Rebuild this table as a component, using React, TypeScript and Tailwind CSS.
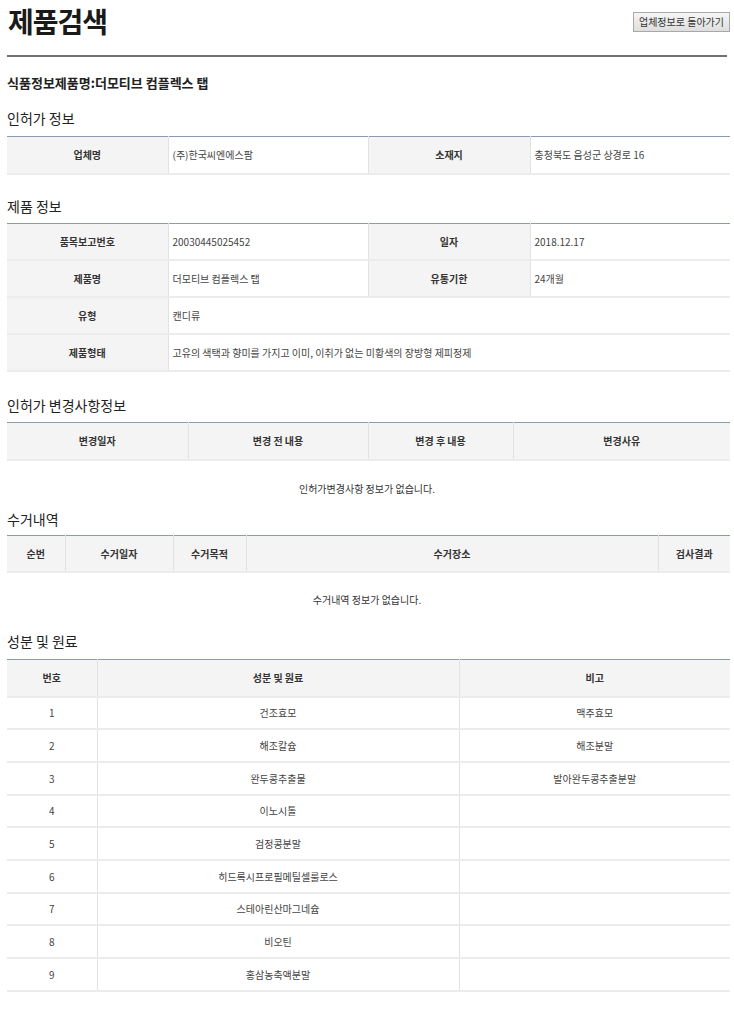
import type { ReactNode } from "react";

const font = {
	fontFamily: '"Noto Sans CJK KR", "Noto Sans", sans-serif',
};

function SectionTitle({ children, className }: { children: ReactNode; className: string }) {
	return (
		<h2 className={`text-[14px] leading-[20px] text-[#222] ${className}`}>{children}</h2>
	);
}

function Th({ children, className = "" }: { children?: ReactNode; className?: string }) {
	return (
		<th
			className={`bg-[#f4f4f4] text-[10px] font-bold text-[#333] text-center align-middle ${className}`}
		>
			{children}
		</th>
	);
}

function Td({
	children,
	className = "",
	colSpan,
}: {
	children?: ReactNode;
	className?: string;
	colSpan?: number;
}) {
	return (
		<td
			colSpan={colSpan}
			className={`text-[10px] text-[#444] align-middle ${className}`}
		>
			{children}
		</td>
	);
}

function InfoTable({
	rows,
}: {
	rows: { cells: [string, string] | [string, string, string, string] }[];
}) {
	return (
		<table className="w-[723px] table-fixed border-collapse border-t border-t-[#8a9ab0]">
			<colgroup>
				<col className="w-[161px]" />
				<col className="w-[200px]" />
				<col className="w-[162px]" />
				<col className="w-[200px]" />
			</colgroup>
			<tbody>
				{rows.map((r, i) => (
					<tr key={i} className="h-[37px] border-b-2 border-b-[#ececec]">
						<Th className="border-r border-r-[#e2e2e2]">{r.cells[0]}</Th>
						{r.cells.length === 4 ? (
							<>
								<Td className="pl-[4px] border-r border-r-[#e2e2e2]">{r.cells[1]}</Td>
								<Th className="border-r border-r-[#e2e2e2]">{r.cells[2]}</Th>
								<Td className="pl-[4px]">{r.cells[3]}</Td>
							</>
						) : (
							<Td colSpan={3} className="pl-[4px]">
								{r.cells[1]}
							</Td>
						)}
					</tr>
				))}
			</tbody>
		</table>
	);
}

function HeadTable({ cols }: { cols: { label: string; w: string }[] }) {
	return (
		<table className="w-[723px] table-fixed border-collapse border-t border-t-[#8a9ab0]">
			<colgroup>
				{cols.map((c) => (
					<col key={c.label} className={c.w} />
				))}
			</colgroup>
			<thead>
				<tr className="h-[37px] border-b-2 border-b-[#ececec]">
					{cols.map((c, i) => (
						<Th
							key={c.label}
							className={i < cols.length - 1 ? "border-r border-r-[#e2e2e2]" : ""}
						>
							{c.label}
						</Th>
					))}
				</tr>
			</thead>
		</table>
	);
}

const ingredients: [string, string][] = [
	["건조효모", "맥주효모"],
	["해조칼슘", "해조분말"],
	["완두콩추출물", "발아완두콩추출분말"],
	["이노시톨", ""],
	["검정콩분말", ""],
	["히드록시프로필메틸셀룰로스", ""],
	["스테아린산마그네슘", ""],
	["비오틴", ""],
	["홍삼농축액분말", ""],
];

export default function App() {
	return (
		<div className="min-h-[1024px] w-[734px] bg-white px-[7px]" style={font}>
			<div className="flex h-[55px] items-start justify-between">
				<h1 className="pl-[1px] pt-[2px] text-[28px] font-bold leading-[38px] tracking-[-1px] text-[#1a1a1a]">
					제품검색
				</h1>
				<button
					type="button"
					className="mr-[-3px] mt-[12px] h-[20px] w-[97px] border border-[#a8a8a8] bg-gradient-to-b from-[#f6f6f6] to-[#dedede] text-[10px] leading-[18px] text-[#333]"
				>
					업체정보로 돌아가기
				</button>
			</div>
			<div className="h-[2px] bg-[#6f6f74]" />

			<p className="mt-[16px] text-[13px] font-bold leading-[20px] text-[#222]">
				식품정보제품명:더모티브 컴플렉스 탭
			</p>

			<SectionTitle className="mt-[15px] mb-[8px]">인허가 정보</SectionTitle>
			<InfoTable rows={[{ cells: ["업체명", "(주)한국씨엔에스팜", "소재지", "충청북도 음성군 상경로 16"] }]} />

			<SectionTitle className="mt-[21px] mb-[7px]">제품 정보</SectionTitle>
			<InfoTable
				rows={[
					{ cells: ["품목보고번호", "20030445025452", "일자", "2018.12.17"] },
					{ cells: ["제품명", "더모티브 컴플렉스 탭", "유통기한", "24개월"] },
					{ cells: ["유형", "캔디류"] },
					{ cells: ["제품형태", "고유의 색택과 향미를 가지고 이미, 이취가 없는 미황색의 장방형 제피정제"] },
				]}
			/>

			<SectionTitle className="mt-[23px] mb-[7px]">인허가 변경사항정보</SectionTitle>
			<HeadTable
				cols={[
					{ label: "변경일자", w: "w-[181px]" },
					{ label: "변경 전 내용", w: "w-[180px]" },
					{ label: "변경 후 내용", w: "w-[145px]" },
					{ label: "변경사유", w: "w-[217px]" },
				]}
			/>
			<p className="mt-[18px] text-center text-[10px] leading-[20px] text-[#333]">
				인허가변경사항 정보가 없습니다.
			</p>

			<SectionTitle className="mt-[10px] mb-[6px]">수거내역</SectionTitle>
			<HeadTable
				cols={[
					{ label: "순번", w: "w-[58px]" },
					{ label: "수거일자", w: "w-[108px]" },
					{ label: "수거목적", w: "w-[73px]" },
					{ label: "수거장소", w: "w-[412px]" },
					{ label: "검사결과", w: "w-[72px]" },
				]}
			/>
			<p className="mt-[17px] text-center text-[10px] leading-[20px] text-[#333]">
				수거내역 정보가 없습니다.
			</p>

			<SectionTitle className="mt-[21px] mb-[8px]">성분 및 원료</SectionTitle>
			<table className="w-[723px] table-fixed border-collapse border-t border-t-[#8a9ab0]">
				<colgroup>
					<col className="w-[90px]" />
					<col className="w-[362px]" />
					<col className="w-[271px]" />
				</colgroup>
				<thead>
					<tr className="h-[37px] border-b-2 border-b-[#ececec]">
						<Th className="border-r border-r-[#e2e2e2]">번호</Th>
						<Th className="border-r border-r-[#e2e2e2]">성분 및 원료</Th>
						<Th>비고</Th>
					</tr>
				</thead>
				<tbody>
					{ingredients.map(([name, note], i) => (
						<tr key={name} className="h-[32.7px] border-b-2 border-b-[#ececec]">
							<Td className="text-center border-r border-r-[#e2e2e2]">{i + 1}</Td>
							<Td className="text-center border-r border-r-[#e2e2e2]">{name}</Td>
							<Td className="text-center">{note}</Td>
						</tr>
					))}
				</tbody>
			</table>
		</div>
	);
}
